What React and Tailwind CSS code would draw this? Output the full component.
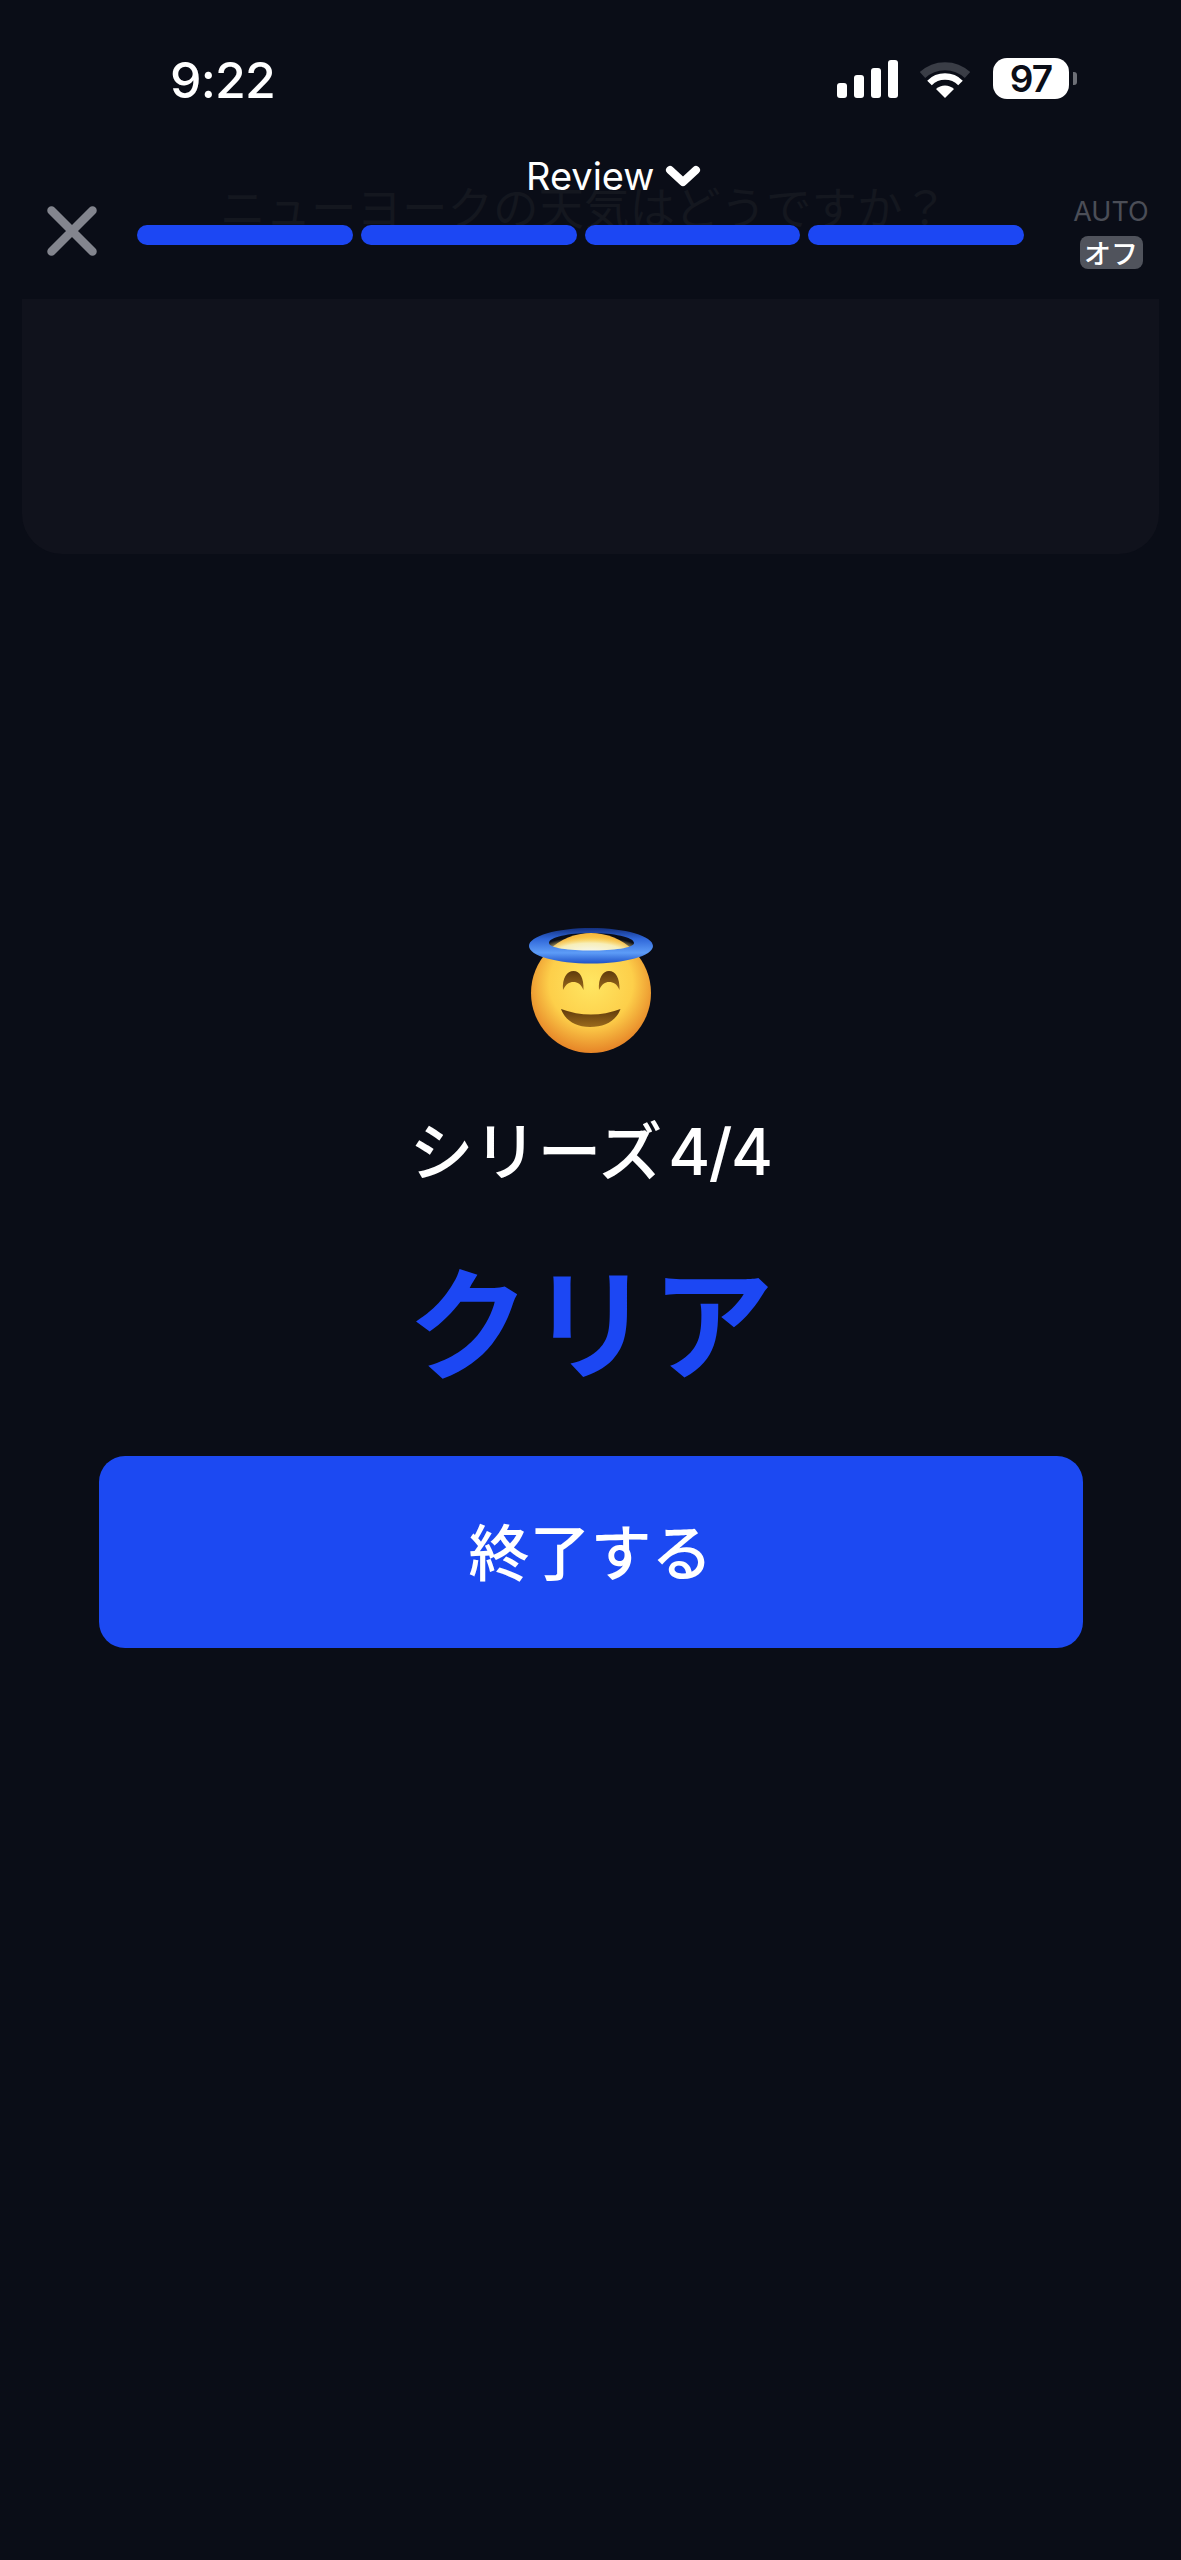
export default function App() {
  const ja = { fontFamily: '"Noto Sans CJK JP", sans-serif' };
  const mixed = { fontFamily: 'Inter, "Noto Sans CJK JP", sans-serif' };
  return (
    <div className="relative h-[2560px] w-full overflow-hidden bg-[#0a0d17] text-white font-['Inter',_'Noto_Sans_CJK_JP',_sans-serif]">
      {/* ghost question behind header */}
      <div className="absolute left-[220px] top-[175px] text-[45.5px] leading-[60px] text-[#14171f] whitespace-nowrap" style={ja}>
        ニューヨークの天気はどうですか？
      </div>

      <header className="relative h-[299px]">
        <div className="flex h-[155px] items-start pl-[170px] pr-[104px] pt-[58px]">
          <span className="text-[50px] font-medium leading-[44px] tracking-[-0.8px]">9:22</span>
          <div className="ml-auto flex items-start">
            <div className="mt-[2px] flex h-[38px] items-end gap-[7px]">
              <span className="h-[15px] w-[10px] rounded-[3px] bg-white" />
              <span className="h-[23px] w-[10px] rounded-[3px] bg-white" />
              <span className="h-[30px] w-[10px] rounded-[3px] bg-white" />
              <span className="h-[38px] w-[10px] rounded-[3px] bg-white" />
            </div>
            <svg className="ml-[21px] mt-[2px]" width="52" height="38" viewBox="0 0 52 38" fill="none">
              <path d="M3.5 15 A 33 33 0 0 1 48.5 15" stroke="#3a3d46" strokeWidth="8" />
              <path d="M10.5 23 A 22 22 0 0 1 41.5 23" stroke="#ffffff" strokeWidth="6.5" />
              <path d="M26 38 L17 29 A 13 13 0 0 1 35 29 Z" fill="#ffffff" />
            </svg>
            <div className="ml-[22px] flex h-[41px] w-[76px] items-center justify-center rounded-[14px] bg-white text-[37px] font-semibold leading-none tracking-[-1px] text-[#0a0d17]">
              97
            </div>
            <span className="ml-[4px] mt-[14px] h-[13px] w-[4px] rounded-r-[3px] bg-[#6d6f76]" />
          </div>
        </div>

        <div className="absolute left-[526px] top-[155px] flex items-center gap-[11px]">
          <span className="text-[38px] font-normal leading-[42px]">Review</span>
          <svg width="36" height="24" viewBox="0 0 36 24" fill="none">
            <path d="M5 6 L18 18 L31 6" stroke="#ffffff" strokeWidth="8" strokeLinecap="round" strokeLinejoin="round" />
          </svg>
        </div>

        <div className="flex items-start pl-[47px] pr-[32px] pt-[44px]">
          <svg className="mt-[7px]" width="50" height="50" viewBox="0 0 50 50" fill="none">
            <path d="M4.5 4.5 L45.5 45.5 M45.5 4.5 L4.5 45.5" stroke="#83858e" strokeWidth="8.5" strokeLinecap="round" />
          </svg>
          <div className="ml-[40px] mt-[26px] flex w-[887px] gap-[8px]">
            <span className="h-[20px] flex-1 rounded-[10px] bg-[#1c47f3]" />
            <span className="h-[20px] flex-1 rounded-[10px] bg-[#1c47f3]" />
            <span className="h-[20px] flex-1 rounded-[10px] bg-[#1c47f3]" />
            <span className="h-[20px] flex-1 rounded-[10px] bg-[#1c47f3]" />
          </div>
          <div className="ml-auto flex w-[76px] flex-col items-center">
            <span className="text-[27px] leading-[26px] text-[#4b4e57]">AUTO</span>
            <span className="mt-[11px] flex h-[33px] w-[63px] items-center justify-center rounded-[8px] bg-[#50535c] text-[27px] font-medium leading-none" style={ja}>
              オフ
            </span>
          </div>
        </div>
      </header>

      <div className="mx-[22px] h-[255px] rounded-b-[40px] bg-[#10121c]" />

      <main className="flex flex-col items-center">
        <svg className="mt-[374px]" width="124" height="125" viewBox="48 28 124 125">
          <defs>
            <radialGradient id="face" cx="50%" cy="42%" r="58%">
              <stop offset="0%" stopColor="#ffe662" />
              <stop offset="60%" stopColor="#fdcf4a" />
              <stop offset="100%" stopColor="#e68427" />
            </radialGradient>
            <radialGradient id="shine" cx="50%" cy="75%" r="60%">
              <stop offset="0%" stopColor="#f6f8f2" />
              <stop offset="60%" stopColor="#f7eeb8" />
              <stop offset="100%" stopColor="#f7d469" stopOpacity="0" />
            </radialGradient>
            <linearGradient id="halo" x1="0" y1="0" x2="0" y2="1">
              <stop offset="0%" stopColor="#14307e" />
              <stop offset="30%" stopColor="#2f66d8" />
              <stop offset="70%" stopColor="#5d9cf7" />
              <stop offset="100%" stopColor="#1f52c8" />
            </linearGradient>
            <linearGradient id="feat" x1="0" y1="0" x2="0" y2="1">
              <stop offset="0%" stopColor="#5f3a0c" />
              <stop offset="100%" stopColor="#9a6a1c" />
            </linearGradient>
          </defs>
          <circle cx="110" cy="93" r="60" fill="url(#face)" />
          <ellipse cx="109" cy="46" rx="46" ry="13" fill="url(#shine)" />
          <path
            fillRule="evenodd"
            d="M48 46 C48 36 76 28 110 28 C144 28 172 36 172 46 C172 56 144 63.5 110 63.5 C76 63.5 48 56 48 46 Z M68 43 C68 48 88 50.5 110 50.5 C132 50.5 153 48 153 43 C153 37 132 33 110 33 C88 33 68 37 68 43 Z"
            fill="url(#halo)"
          />
          <path d="M82 90 C81 78 86 71 92.5 71 C99 71 103 78 102.5 90 C100 84 96.5 82 92.5 82 C88 82 85 84 82 90 Z" fill="url(#feat)" />
          <path d="M118 90 C117 78 122 71 128 71 C134.5 71 139 78 138.5 90 C136 84 132.5 82 128 82 C124 82 121 84 118 90 Z" fill="url(#feat)" />
          <path d="M80 109 Q110 120 139.5 109 C135 121 124 127 109 127 C94 127 84 120 80 109 Z" fill="url(#feat)" />
        </svg>

        <p className="mt-[54px] flex items-baseline gap-[6px] text-[64px] font-medium leading-[90px] whitespace-nowrap" style={mixed}>
          <span>シリーズ</span>
          <span className="tracking-[-1.5px]">4/4</span>
        </p>

        <p className="mt-[35px] text-[122px] font-semibold leading-[170px] text-[#1c47f3] whitespace-nowrap" style={ja}>クリア</p>

        <button className="mt-[54px] flex h-[192px] w-[984px] items-center justify-center rounded-[26px] bg-[#1c49f2] pb-[5px] text-[61px] font-medium text-white" style={ja}>
          終了する
        </button>
      </main>
    </div>
  );
}
